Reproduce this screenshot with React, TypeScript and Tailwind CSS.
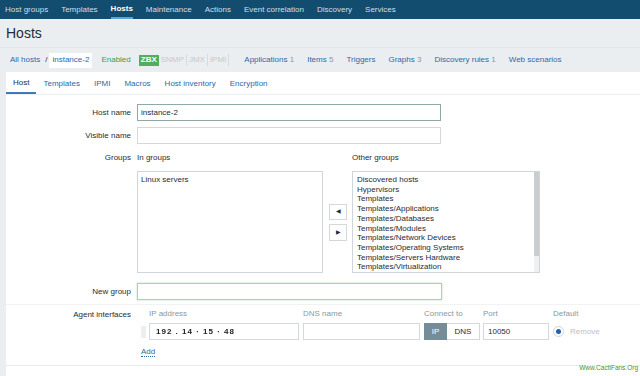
const navItems = ["Host groups", "Templates", "Hosts", "Maintenance", "Actions", "Event correlation", "Discovery", "Services"];

const tabs = ["Host", "Templates", "IPMI", "Macros", "Host inventory", "Encryption"];

const otherGroups = [
  "Discovered hosts",
  "Hypervisors",
  "Templates",
  "Templates/Applications",
  "Templates/Databases",
  "Templates/Modules",
  "Templates/Network Devices",
  "Templates/Operating Systems",
  "Templates/Servers Hardware",
  "Templates/Virtualization",
];

const links: { label: string; count?: string }[] = [
  { label: "Applications", count: "1" },
  { label: "Items", count: "5" },
  { label: "Triggers" },
  { label: "Graphs", count: "3" },
  { label: "Discovery rules", count: "1" },
  { label: "Web scenarios" },
];

function Label({ children }: { children: React.ReactNode }) {
  return <div className="w-[125px] shrink-0 text-right leading-[10px]">{children}</div>;
}

export default function App() {
  return (
    <div className="w-[640px] h-[376px] overflow-hidden bg-[#ebeef0] text-[8px] text-[#1f2c33] relative" style={{ fontFamily: '"Liberation Sans", Arial, sans-serif' }}>
      {/* top nav */}
      <div className="h-[19px] bg-[#124d6f] flex items-stretch pl-[5px] gap-[13px]">
        {navItems.map((n) => (
          <div
            key={n}
            className={`flex items-center pt-[1px] ${n === "Hosts" ? "text-white font-bold border-b-2 border-[#5aa5d6]" : "text-[#d2dfe7]"}`}
          >
            {n}
          </div>
        ))}
      </div>

      {/* title */}
      <div className="h-[29px] flex items-center px-[6px] border-b border-[#e1e5e8]">
        <h1 className="text-[14px] text-[#1f2c33]">Hosts</h1>
      </div>

      {/* breadcrumb / host nav */}
      <div className="h-[24px] flex items-center pl-[10px]">
        <span className="text-[#2a69a8]">All hosts</span>
        <span className="ml-[5px] text-[#1f2c33]">/</span>
        <span className="ml-[2px] bg-white h-[15px] px-[3px] flex items-center text-[#2a69a8]">instance-2</span>
        <span className="ml-[9px] text-[#3f9b43]">Enabled</span>
        <div className="ml-[8px] flex items-center h-[11px]">
          <span className="bg-[#52ad5c] text-white font-bold px-[2px] h-[11px] flex items-center">ZBX</span>
          <span className="text-[#c3c9cc] px-[2px] border-r border-[#d8dcde]">SNMP</span>
          <span className="text-[#c3c9cc] px-[2px] border-r border-[#d8dcde]">JMX</span>
          <span className="text-[#c3c9cc] px-[2px] border-r border-[#d8dcde]">IPMI</span>
        </div>
        <div className="ml-[15px] flex items-center gap-[13px]">
          {links.map((l) => (
            <span key={l.label} className="text-[#2a69a8]">
              {l.label}
              {l.count && <span className="text-[#8a979e]"> {l.count}</span>}
            </span>
          ))}
        </div>
      </div>

      {/* panel */}
      <div className="ml-[6px] bg-white h-[304px]">
        {/* tabs */}
        <div className="h-[23px] flex border-b border-[#eceff1]">
          {tabs.map((t) => (
            <div
              key={t}
              className={`px-[7px] flex items-center pt-[1px] ${t === "Host" ? "border-b-2 border-[#3f7ab4] text-[#1f2c33]" : "text-[#2a69a8]"}`}
            >
              {t}
            </div>
          ))}
        </div>

        {/* host name */}
        <div className="flex items-center mt-[9px]">
          <Label>Host name</Label>
          <div className="ml-[6px] w-[304px] h-[17px] border border-[#8ea9a6] flex items-center pl-[3px]">instance-2</div>
        </div>

        <div className="flex items-center mt-[6px]">
          <Label>Visible name</Label>
          <div className="ml-[6px] w-[304px] h-[17px] border border-[#d3d8db]" />
        </div>

        {/* groups */}
        <div className="flex mt-[9px]">
          <Label>Groups</Label>
          <div className="ml-[6px] flex">
            <div className="w-[186px]">
              <div className="leading-[10px]">In groups</div>
              <div className="mt-[8px] h-[102px] border border-[#cfd5d8] pl-[3px] pt-[3px] leading-[10px]">Linux servers</div>
            </div>
            <div className="ml-[6px] mt-[18px] h-[102px] flex flex-col justify-center gap-[4px]">
              <div className="w-[18px] h-[16px] border border-[#d3d8db] flex items-center justify-center text-[6px]">◀</div>
              <div className="w-[18px] h-[17px] border border-[#d3d8db] flex items-center justify-center text-[6px]">▶</div>
            </div>
            <div className="ml-[5px] w-[188px]">
              <div className="leading-[10px]">Other groups</div>
              <div className="mt-[8px] h-[102px] border border-[#cfd5d8] flex">
                <div className="flex-1 pl-[4px] pt-[3px] leading-[9.7px]">
                  {otherGroups.map((g) => (
                    <div key={g}>{g}</div>
                  ))}
                </div>
                <div className="w-[5px] bg-[#eef0f1] flex flex-col">
                  <div className="h-[84px] bg-[#c9cdcf]" />
                </div>
              </div>
            </div>
          </div>
        </div>

        {/* new group */}
        <div className="flex items-center mt-[10px]">
          <Label>New group</Label>
          <div className="ml-[6px] w-[305px] h-[17px] border border-[#a9d3a9] shadow-[0_0_2px_#b8e0b8]" />
        </div>

        {/* agent interfaces */}
        <div className="flex mt-[4px] border-t border-[#f0f2f3] pt-[4px]">
          <Label>
            <div className="pt-[1px]">Agent interfaces</div>
          </Label>
          <div className="ml-[6px] flex-1">
            <div className="flex text-[#8a979e] leading-[10px] pl-[12px]">
              <div className="w-[154px]">IP address</div>
              <div className="w-[121px]">DNS name</div>
              <div className="w-[59px]">Connect to</div>
              <div className="w-[70px]">Port</div>
              <div>Default</div>
            </div>
            <div className="flex items-center mt-[4px]">
              <div className="w-[5px] h-[12px] bg-[#eceff1] ml-[4px]" />
              <div className="ml-[3px] w-[150px] h-[17px] border border-[#d3d8db] flex items-center pl-[6px]">
                <span className="blur-[0.5px] font-bold text-[#222] tracking-[1px]">192 . 14 · 15 · 48</span>
              </div>
              <div className="ml-[4px] w-[117px] h-[17px] border border-[#d3d8db]" />
              <div className="ml-[4px] flex h-[17px]">
                <div className="w-[23px] bg-[#768d99] text-white flex items-center justify-center">IP</div>
                <div className="w-[33px] border border-[#d3d8db] border-l-0 flex items-center justify-center">DNS</div>
              </div>
              <div className="ml-[3px] w-[66px] h-[17px] border border-[#d3d8db] flex items-center pl-[4px]">10050</div>
              <div className="ml-[4px] w-[11px] h-[11px] rounded-full border border-[#cfd6da] flex items-center justify-center">
                <div className="w-[5px] h-[5px] rounded-full bg-[#1f65a6]" />
              </div>
              <div className="ml-[6px] text-[#b9c2c7]">Remove</div>
            </div>
            <div className="mt-[7px] ml-[4px] leading-[10px]">
              <span className="text-[#2a69a8] border-b border-dotted border-[#2a69a8]">Add</span>
            </div>
          </div>
        </div>
        <div className="mt-[8px] border-t border-[#e9ecee]" />
      </div>

      <div className="absolute right-[2px] bottom-[3px] text-[6.5px] text-[#3c9a2c]">Www.CactiFans.Org</div>
    </div>
  );
}
